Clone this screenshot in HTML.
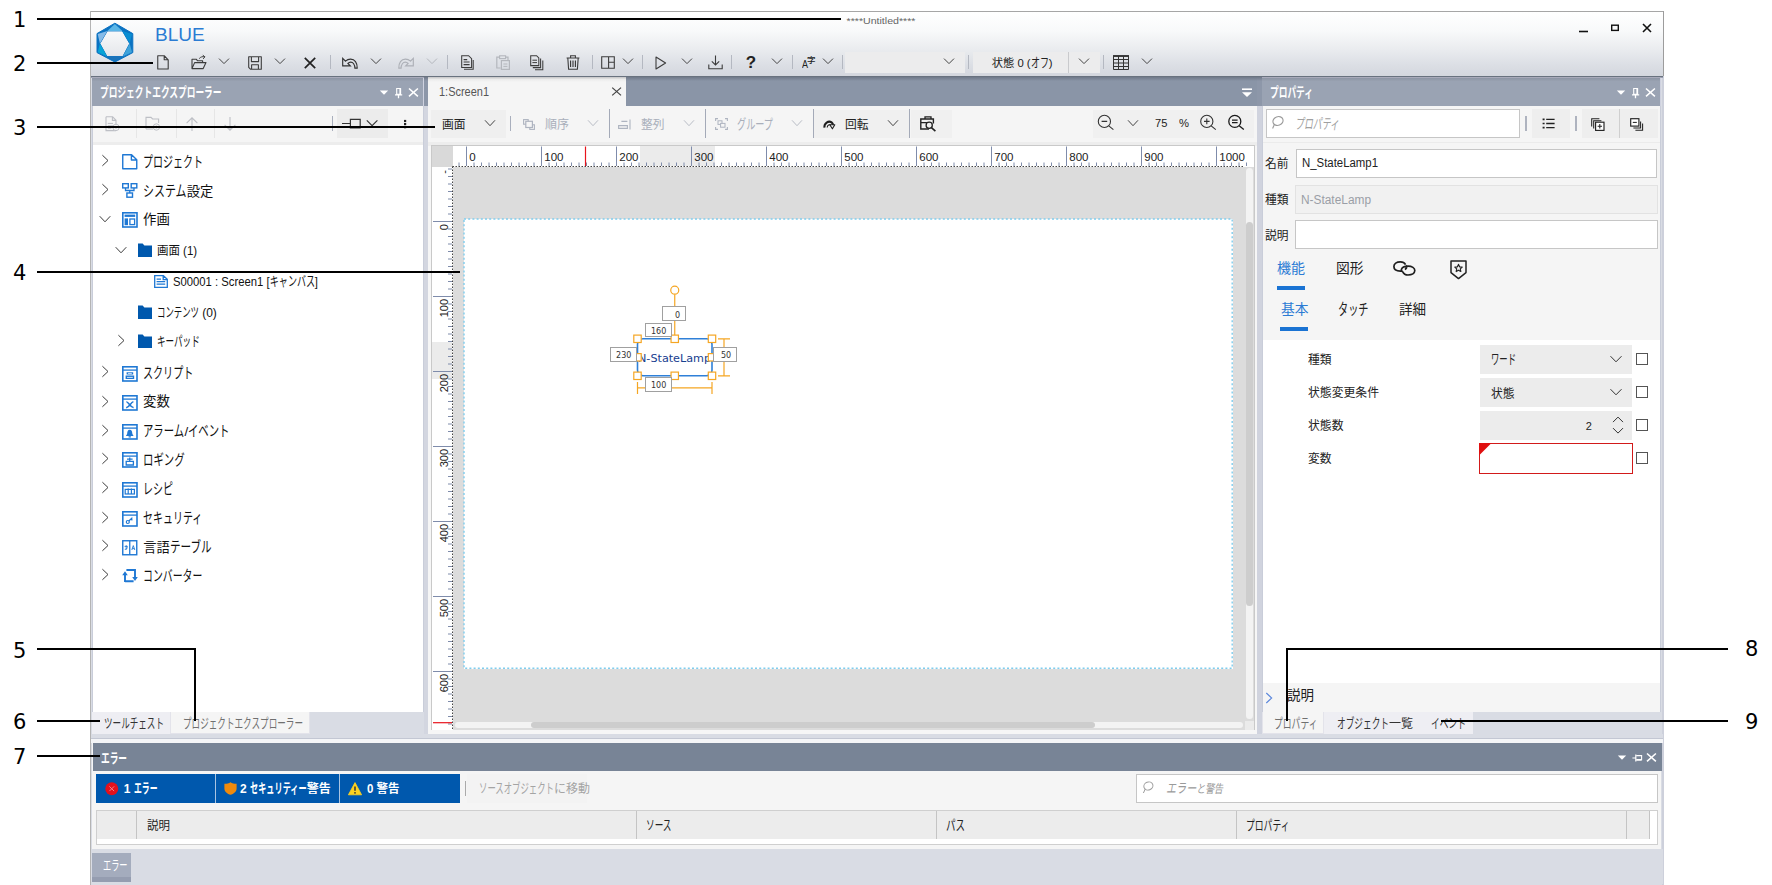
<!DOCTYPE html>
<html lang="ja"><head><meta charset="utf-8"><title>BLUE</title><style>
html,body{margin:0;padding:0;background:#fff;}
body{width:1772px;height:885px;position:relative;overflow:hidden;font-family:"Liberation Sans","Noto Sans CJK JP",sans-serif;}
div,span.t,svg{position:absolute;}
span.t{white-space:nowrap;display:block;}
svg{overflow:visible;}
</style></head><body>
<div style="left:90px;top:11px;width:1574px;height:874px;background:#d9dce4;"></div>
<div style="left:90px;top:11px;width:1574px;height:1px;background:#a6a6a6;"></div>
<div style="left:90px;top:11px;width:1px;height:874px;background:#b4b4b4;"></div>
<div style="left:1663px;top:11px;width:1px;height:65px;background:#9c9c9c;"></div>
<div style="left:1662px;top:76px;width:2px;height:809px;background:#cdd0db;"></div>
<div style="left:91px;top:12px;width:1572px;height:64px;background:linear-gradient(to bottom,#ffffff 0%,#f8f9fa 30%,#eaecef 58%,#dcdfe5 82%,#d4d7de 100%);"></div>
<div style="left:91px;top:75.6px;width:1572px;height:1.3px;background:#69727f;"></div>
<div style="left:91px;top:76.9px;width:1572px;height:1.1px;background:#9aa0b0;"></div>
<span class="t" id="t0" style="top:13.80px;font-size:9px;line-height:14px;color:#666;left:881px;transform-origin:50% 50%;transform:translateX(-50%) scaleX(1.1785);">****Untitled****</span>
<span class="t" id="t1" style="top:22.50px;font-size:19px;line-height:24px;color:#2b7cd3;left:155px;transform-origin:0 50%;">BLUE</span>
<svg style="left:1575px;top:20px;" width="90" height="20" viewBox="0 0 90 20"><path d="M4 11.5h9" stroke="#111" stroke-width="1.6" fill="none"/><rect x="36.7" y="5.2" width="6.6" height="5.2" fill="none" stroke="#111" stroke-width="1.4"/><path d="M68 4 L76 12 M76 4 L68 12" stroke="#111" stroke-width="1.6" fill="none"/></svg>
<svg style="left:97px;top:23.4px;" width="36" height="39.5" viewBox="0 0 36 39.5"><path d="M17.90 0.20 L35.80 10.60 L35.80 29.60 L17.90 39.00 L0.00 29.60 L0.00 10.60 Z M10.30 7.90 L25.40 7.90 L32.70 20.60 L25.80 33.60 L10.00 33.60 L2.90 20.60 Z" fill="#0a72c2" fill-rule="evenodd" stroke="#0a72c2" stroke-width="1" stroke-linejoin="round"/><path d="M17.89 1.02 L25.40 7.90 L10.30 7.90 Z" fill="#5ab5e6"/><path d="M35.08 10.99 L32.70 20.60 L25.40 7.90 Z" fill="#0a8ed2"/><path d="M35.10 29.33 L25.80 33.60 L32.70 20.60 Z" fill="#3fa3da"/><path d="M17.90 38.42 L10.00 33.60 L25.80 33.60 Z" fill="#1b73ba"/><path d="M0.69 29.33 L2.90 20.60 L10.00 33.60 Z" fill="#08a4d6"/><path d="M0.70 10.99 L10.30 7.90 L2.90 20.60 Z" fill="#86bbe8"/></svg>
<svg style="left:157px;top:55px;" width="12" height="15" viewBox="0 0 12 15"><path d="M0.75 0.75 H7.2 L11.2 4.8 V14 H0.75 Z M7.2 0.75 V4.8 H11.2" fill="none" stroke="#3c3c3c" stroke-width="1.1" stroke-linejoin="round"/></svg>
<svg style="left:191px;top:55px;" width="16" height="15" viewBox="0 0 16 15"><path d="M1 13.6 V4.2 H5.2 L6.6 5.8 H11.6 V7.6 M1 13.6 L3.6 7.6 H15 L12.2 13.6 Z" fill="none" stroke="#3c3c3c" stroke-width="1.1" stroke-linejoin="round"/><path d="M8.2 3.6 C9.6 1.8 11.6 1.4 13.6 1.8 M11.8 0.2 L13.9 1.8 L12.2 3.9" fill="none" stroke="#3c3c3c" stroke-width="1"/></svg>
<svg style="left:217.7px;top:57.4px;" width="12" height="8" viewBox="0 0 12 8"><path d="M1.0 1.5999999999999996 L6 6.6 L11.0 1.5999999999999996" fill="none" stroke="#444" stroke-width="1"/></svg>
<svg style="left:248px;top:55.5px;" width="14" height="14" viewBox="0 0 14 14"><path d="M0.7 0.7 H13.3 V13.3 H2.7 L0.7 11.3 Z M3.4 0.7 V5.6 H10.6 V0.7 M3.6 13.3 V8.8 H10.4 V13.3" fill="none" stroke="#3c3c3c" stroke-width="1.1" stroke-linejoin="round"/></svg>
<svg style="left:274px;top:57.4px;" width="12" height="8" viewBox="0 0 12 8"><path d="M1.0 1.5999999999999996 L6 6.6 L11.0 1.5999999999999996" fill="none" stroke="#444" stroke-width="1"/></svg>
<svg style="left:304px;top:57px;" width="12" height="12" viewBox="0 0 12 12"><path d="M0.8 0.8 L11.2 11.2 M11.2 0.8 L0.8 11.2" stroke="#222" stroke-width="1.7" fill="none"/></svg>
<div style="left:330px;top:55px;width:1px;height:14px;background:#b4b8c1;"></div>
<svg style="left:341.8px;top:56.8px;" width="16" height="12" viewBox="0 0 16 12"><path d="M0.7 1.3 V8.9 H8.3 L5.9 6.5 C7.5 4.7 10.1 4.7 11.5 6.5 C12.5 7.9 12.9 9.5 12.9 11.1 H15.2 C15.3 8.7 14.8 6.4 13.5 4.6 C11.1 1.3 6.3 1.5 3.5 4.1 Z" fill="none" stroke="#333" stroke-width="1.15" stroke-linejoin="miter"/></svg>
<svg style="left:369.8px;top:57.4px;" width="12" height="8" viewBox="0 0 12 8"><path d="M1.0 1.5999999999999996 L6 6.6 L11.0 1.5999999999999996" fill="none" stroke="#444" stroke-width="1"/></svg>
<svg style="left:397.8px;top:56.8px;" width="16" height="12" viewBox="0 0 16 12"><g transform="translate(16,0) scale(-1,1)"><path d="M0.7 1.3 V8.9 H8.3 L5.9 6.5 C7.5 4.7 10.1 4.7 11.5 6.5 C12.5 7.9 12.9 9.5 12.9 11.1 H15.2 C15.3 8.7 14.8 6.4 13.5 4.6 C11.1 1.3 6.3 1.5 3.5 4.1 Z" fill="none" stroke="#adb0b7" stroke-width="1.15" stroke-linejoin="miter"/></g></svg>
<svg style="left:425.8px;top:57.4px;" width="12" height="8" viewBox="0 0 12 8"><path d="M1.0 1.5999999999999996 L6 6.6 L11.0 1.5999999999999996" fill="none" stroke="#b4b7bd" stroke-width="1"/></svg>
<div style="left:447px;top:55px;width:1px;height:14px;background:#b4b8c1;"></div>
<svg style="left:461px;top:55px;" width="13" height="15" viewBox="0 0 13 15"><path d="M0.7 0.7 H7.6 L10.6 3.7 V12.4 H0.7 Z" fill="none" stroke="#3c3c3c" stroke-width="1.05"/><path d="M2.6 4.6 H6.2 M2.6 7 H8.6 M2.6 9.6 H8.6" stroke="#3c3c3c" stroke-width="1.1"/><path d="M12.2 5 V14.2 H3" fill="none" stroke="#3c3c3c" stroke-width="1.05"/></svg>
<svg style="left:495.5px;top:55px;" width="14" height="15" viewBox="0 0 14 15"><path d="M4 2.2 H0.8 V13 H4.6 M9.6 2.2 H12 V5" fill="none" stroke="#b4b7bd" stroke-width="1.2"/><rect x="3.6" y="0.8" width="6" height="2.8" fill="none" stroke="#b4b7bd" stroke-width="1.1"/><rect x="5.4" y="5.6" width="8" height="8.8" fill="none" stroke="#b4b7bd" stroke-width="1.2"/><path d="M7.4 9 H11.4 M7.4 11.4 H11.4" stroke="#b4b7bd" stroke-width="1"/></svg>
<svg style="left:530px;top:54.5px;" width="14" height="16" viewBox="0 0 14 16"><path d="M0.7 0.7 H6.6 L8.8 2.9 V10.6 H0.7 Z" fill="none" stroke="#3c3c3c" stroke-width="1.05"/><path d="M2.4 5.2 H7 M2.4 7.6 H7" stroke="#3c3c3c" stroke-width="1"/><path d="M10.6 3.4 V12.6 H2.8 M12.8 5.6 V14.8 H5" fill="none" stroke="#3c3c3c" stroke-width="1.05"/></svg>
<svg style="left:565.5px;top:55px;" width="14" height="15" viewBox="0 0 14 15"><path d="M0.6 3 H13.4 M4.6 2.8 V0.8 H9.4 V2.8 M1.8 3 L2.6 14.2 H11.4 L12.2 3" fill="none" stroke="#3c3c3c" stroke-width="1.1"/><path d="M4.6 5.4 V12 M7 5.4 V12 M9.4 5.4 V12" stroke="#333" stroke-width="1.1"/></svg>
<div style="left:592px;top:55px;width:1px;height:14px;background:#b4b8c1;"></div>
<svg style="left:601px;top:56px;" width="14" height="13" viewBox="0 0 14 13"><path d="M0.7 0.7 H13.3 V12.3 H0.7 Z M7.6 0.7 V12.3 M7.6 6.2 H13.3" fill="none" stroke="#3c3c3c" stroke-width="1.1"/></svg>
<svg style="left:622px;top:57.4px;" width="12" height="8" viewBox="0 0 12 8"><path d="M1.0 1.5999999999999996 L6 6.6 L11.0 1.5999999999999996" fill="none" stroke="#444" stroke-width="1"/></svg>
<div style="left:642px;top:55px;width:1px;height:14px;background:#b4b8c1;"></div>
<svg style="left:654.5px;top:55.5px;" width="12" height="14" viewBox="0 0 12 14"><path d="M1 1 L10.6 7 L1 13 Z" fill="none" stroke="#3c3c3c" stroke-width="1.1" stroke-linejoin="round"/></svg>
<svg style="left:681px;top:57.4px;" width="12" height="8" viewBox="0 0 12 8"><path d="M1.0 1.5999999999999996 L6 6.6 L11.0 1.5999999999999996" fill="none" stroke="#444" stroke-width="1"/></svg>
<svg style="left:707.5px;top:54.5px;" width="15" height="15" viewBox="0 0 15 15"><path d="M7.5 0.6 V9.8 M3.8 6.4 L7.5 10 L11.2 6.4 M0.8 9.4 V13.8 H14.2 V9.4" fill="none" stroke="#3c3c3c" stroke-width="1.1"/></svg>
<div style="left:731px;top:55px;width:1px;height:14px;background:#b4b8c1;"></div>
<span class="t" id="t2" style="top:52.50px;font-size:17px;line-height:20px;color:#222;font-weight:700;left:751px;transform-origin:50% 50%;transform:translateX(-50%);">?</span>
<svg style="left:771px;top:57.4px;" width="12" height="8" viewBox="0 0 12 8"><path d="M1.0 1.5999999999999996 L6 6.6 L11.0 1.5999999999999996" fill="none" stroke="#444" stroke-width="1"/></svg>
<div style="left:792px;top:55px;width:1px;height:14px;background:#b4b8c1;"></div>
<span class="t" id="t3" style="top:60.20px;font-size:10px;line-height:10px;color:#222;left:802px;transform-origin:0 50%;transform:scaleX(0.8993);">A</span>
<span class="t" id="t4" style="top:55.00px;font-size:8.5px;line-height:10px;color:#222;font-weight:500;left:807px;transform-origin:0 50%;">字</span>
<svg style="left:822px;top:57.4px;" width="12" height="8" viewBox="0 0 12 8"><path d="M1.0 1.5999999999999996 L6 6.6 L11.0 1.5999999999999996" fill="none" stroke="#444" stroke-width="1"/></svg>
<div style="left:842px;top:55px;width:1px;height:14px;background:#b4b8c1;"></div>
<div style="left:845px;top:51.5px;width:120px;height:21.5px;background:#ececed;"></div>
<svg style="left:943px;top:57.4px;" width="12" height="8" viewBox="0 0 12 8"><path d="M1.0 1.5999999999999996 L6 6.6 L11.0 1.5999999999999996" fill="none" stroke="#444" stroke-width="1"/></svg>
<div style="left:968px;top:55px;width:1px;height:14px;background:#b4b8c1;"></div>
<div style="left:973px;top:51.5px;width:127px;height:21.5px;background:#ececed;"></div>
<div style="left:1068px;top:51.5px;width:1px;height:21.5px;background:#c9cacd;"></div>
<span class="t" id="t5" aria-label="状態 0 (オフ)" style="top:54.30px;font-size:11.3px;line-height:17px;color:#222;left:991.7px;transform-origin:0 50%;">状態 0 (<span class="k" style="font-size:1.13em;display:inline-block;width:18.11px;transform:scaleX(0.7103);transform-origin:0 50%;">オフ</span>)</span>
<svg style="left:1078px;top:57.4px;" width="12" height="8" viewBox="0 0 12 8"><path d="M1.0 1.5999999999999996 L6 6.6 L11.0 1.5999999999999996" fill="none" stroke="#444" stroke-width="1"/></svg>
<div style="left:1103px;top:55px;width:1px;height:14px;background:#b4b8c1;"></div>
<svg style="left:1113px;top:55px;" width="16" height="15" viewBox="0 0 16 15"><path d="M0.5 1 H15.5 V14.5 H0.5 Z M0.5 4.5 H15.5 M0.5 8 H15.5 M0.5 11.5 H15.5 M5.5 1 V14.5 M10.5 1 V14.5" fill="none" stroke="#333" stroke-width="1"/><path d="M0 1 H16" stroke="#333" stroke-width="1.8"/></svg>
<svg style="left:1141px;top:57.4px;" width="12" height="8" viewBox="0 0 12 8"><path d="M1.0 1.5999999999999996 L6 6.6 L11.0 1.5999999999999996" fill="none" stroke="#444" stroke-width="1"/></svg>
<div style="left:92px;top:78px;width:332px;height:656px;background:#c9cdd9;"></div>
<div style="left:92px;top:78px;width:332px;height:28px;background:linear-gradient(to bottom,#8d95a4 0,#9aa3b3 3.5px);"></div>
<div style="left:92px;top:77.1px;width:332px;height:1px;background:#a8aaba;"></div>
<span class="t" id="t6" style="top:83.50px;font-size:12px;line-height:18px;color:#fff;font-weight:700;left:100px;transform-origin:0 50%;transform:scaleX(0.6420);"><span class="k" style="font-size:1.13em;">プロジェクトエクスプローラー</span></span>
<svg style="left:378px;top:84.5px;" width="44" height="16" viewBox="0 0 44 16"><path d="M1.8 5.5 H10.2 L6 9.7 Z" fill="#fff"/><path d="M18.7 3.5 H22.4 V9.4 H18.7 Z" fill="none" stroke="#fff" stroke-width="1.1"/><path d="M22.3 3.2 V9.4" stroke="#fff" stroke-width="1.7"/><path d="M17 9.9 H24.2 M20.5 10.1 V13.2" fill="none" stroke="#fff" stroke-width="1.3"/><path d="M31 3.5 L39.9 11.3 M39.9 3.5 L31 11.3" stroke="#fff" stroke-width="1.6" fill="none"/></svg>
<div style="left:423.2px;top:78px;width:1px;height:28px;background:#cfd2e0;"></div>
<div style="left:93px;top:106px;width:330px;height:35.5px;background:#f5f5f5;"></div>
<div style="left:93px;top:141.5px;width:330px;height:3.5px;background:#ededed;"></div>
<div style="left:93px;top:145px;width:330px;height:567px;background:#fff;"></div>
<svg style="left:105px;top:116px;" width="16" height="16" viewBox="0 0 16 16"><path d="M1 0.8 H7.6 L11 4.2 V8 M11 14.6 H1 V0.8 M7.4 1 V4.4 H11" fill="none" stroke="#bdbfc5" stroke-width="1.1"/><path d="M2.8 7.4 H8 M2.8 9.8 H8 M2.8 12.2 H6.4" stroke="#bdbfc5" stroke-width="1"/><circle cx="11" cy="11.4" r="3.2" fill="#f5f5f5" stroke="#bdbfc5" stroke-width="1"/><path d="M9.4 11.4 H12.6 M11 9.8 V13" stroke="#bdbfc5" stroke-width="0.9"/></svg>
<svg style="left:145px;top:116px;" width="16" height="16" viewBox="0 0 16 16"><path d="M1 13 V1.4 H6 L7.6 3 H13.6 V7" fill="none" stroke="#bdbfc5" stroke-width="1.1"/><path d="M1 13 H8" stroke="#bdbfc5" stroke-width="1.1"/><circle cx="11.4" cy="11" r="3.2" fill="#f5f5f5" stroke="#bdbfc5" stroke-width="1"/><path d="M9.8 11 H13 M11.4 9.4 V12.6" stroke="#bdbfc5" stroke-width="0.9"/></svg>
<svg style="left:185px;top:116px;" width="14" height="16" viewBox="0 0 14 16"><path d="M7 15 V2 M1.6 7.2 L7 1.8 L12.4 7.2" fill="none" stroke="#bdbfc5" stroke-width="1.1"/></svg>
<svg style="left:223px;top:116px;" width="14" height="16" viewBox="0 0 14 16"><path d="M7 1 V14 M1.6 8.8 L7 14.2 L12.4 8.8" fill="none" stroke="#bdbfc5" stroke-width="1.1"/></svg>
<div style="left:135.5px;top:109px;width:1px;height:29px;background:#e6e6e6;"></div>
<div style="left:175.5px;top:109px;width:1px;height:29px;background:#e6e6e6;"></div>
<div style="left:213.5px;top:109px;width:1px;height:29px;background:#e6e6e6;"></div>
<div style="left:332px;top:116px;width:1px;height:15px;background:#a9afbd;"></div>
<div style="left:336.5px;top:109px;width:51.5px;height:29px;background:#ececec;"></div>
<svg style="left:341px;top:116px;" width="22" height="14" viewBox="0 0 22 14"><path d="M1 7.5 H9.4 M9.4 3.4 H19.2 V11.8 H9.4 Z" fill="none" stroke="#333" stroke-width="1.2"/></svg>
<svg style="left:366px;top:118.8px;" width="12" height="8" viewBox="0 0 12 8"><path d="M0.7999999999999998 1.2999999999999998 L6.1 6.7 L11.399999999999999 1.2999999999999998" fill="none" stroke="#333" stroke-width="1.1"/></svg>
<svg style="left:402px;top:117px;" width="6" height="14" viewBox="0 0 6 14"><rect x="2" y="2.9" width="2.2" height="2.2" fill="#222"/><rect x="2" y="6" width="2.2" height="2.2" fill="#222"/><rect x="2" y="9.1" width="2.2" height="2.2" fill="#222"/></svg>
<svg style="left:100px;top:153.79999999999998px;" width="10" height="13" viewBox="0 0 10 13"><path d="M2.4000000000000004 1.2000000000000002 L8.0 6.5 L2.4000000000000004 11.8" fill="none" stroke="#3c3c3c" stroke-width="1"/></svg>
<svg style="left:122.2px;top:154.0px;" width="15.8" height="15.8" viewBox="0 0 15.8 15.8"><path d="M0.75 0.75 H9.6 L14.75 5.8 V14.75 H0.75 Z M9.4 0.9 V6 H14.6" fill="none" stroke="#1f78d4" stroke-width="1.4" stroke-linejoin="round"/></svg>
<span class="t" id="t7" style="top:151.60px;font-size:13.3px;line-height:20px;color:#111;left:143.2px;transform-origin:0 50%;transform:scaleX(0.6660);"><span class="k" style="font-size:1.13em;">プロジェクト</span></span>
<svg style="left:100px;top:183.1px;" width="10" height="13" viewBox="0 0 10 13"><path d="M2.4000000000000004 1.2000000000000002 L8.0 6.5 L2.4000000000000004 11.8" fill="none" stroke="#3c3c3c" stroke-width="1"/></svg>
<svg style="left:122.2px;top:183.3px;" width="15.8" height="15.8" viewBox="0 0 15.8 15.8"><rect x="0.7" y="0.7" width="5.6" height="4.2" fill="none" stroke="#1f78d4" stroke-width="1.4"/><rect x="9.2" y="0.7" width="5.6" height="4.2" fill="none" stroke="#1f78d4" stroke-width="1.4"/><rect x="4.9" y="10" width="5.6" height="4.2" fill="none" stroke="#1f78d4" stroke-width="1.4"/><path d="M3.5 5 V7.5 H12 V5 M7.75 7.5 V10" fill="none" stroke="#1f78d4" stroke-width="1.3"/></svg>
<span class="t" id="t8" aria-label="システム設定" style="top:180.90px;font-size:13.3px;line-height:20px;color:#111;left:143.2px;transform-origin:0 50%;"><span class="k" style="font-size:1.13em;display:inline-block;width:43.61px;transform:scaleX(0.7313);transform-origin:0 50%;">システム</span>設定</span>
<svg style="left:99px;top:213.70000000000002px;" width="12" height="10" viewBox="0 0 12 10"><path d="M0.7000000000000002 2.2 L6 7.8 L11.3 2.2" fill="none" stroke="#3c3c3c" stroke-width="1"/></svg>
<svg style="left:122.2px;top:212.10000000000002px;" width="15.8" height="15.8" viewBox="0 0 15.8 15.8"><rect x="0.8" y="0.8" width="14.2" height="14.2" fill="none" stroke="#1f78d4" stroke-width="1.6"/><rect x="2.6" y="2.6" width="10.6" height="2.3" fill="#1f78d4"/><rect x="2.6" y="6.4" width="3.4" height="6.8" fill="#1f78d4"/><rect x="7.9" y="7" width="4.7" height="5.6" fill="none" stroke="#1f78d4" stroke-width="1.3"/></svg>
<span class="t" id="t9" style="top:209.70px;font-size:13.3px;line-height:20px;color:#111;left:143.2px;transform-origin:0 50%;transform:scaleX(1.0078);">作画</span>
<svg style="left:115px;top:244.9px;" width="12" height="10" viewBox="0 0 12 10"><path d="M0.7000000000000002 2.2 L6 7.8 L11.3 2.2" fill="none" stroke="#3c3c3c" stroke-width="1"/></svg>
<svg style="left:138px;top:243.3px;" width="14" height="14" viewBox="0 0 14 14"><path d="M0 0.4 H4.6 L6.4 2.6 H14 V14 H0 Z" fill="#0058ad"/></svg>
<span class="t" id="t10" style="top:240.50px;font-size:12px;line-height:20px;color:#111;left:156.8px;transform-origin:0 50%;transform:scaleX(0.9544);">画面 (1)</span>
<svg style="left:154px;top:274.7px;" width="14" height="13" viewBox="0 0 14 13"><path d="M0.7 0.7 H9.4 L13.3 4.4 V12.3 H0.7 Z M9.2 0.9 V4.6 H13.1" fill="none" stroke="#1f78d4" stroke-width="1.3"/><path d="M2.6 4.2 H7 M2.6 6.6 H11.2 M2.6 9.2 H11.2" stroke="#1f78d4" stroke-width="1.3"/></svg>
<span class="t" id="t11" aria-label="S00001 : Screen1 [キャンバス]" style="top:271.50px;font-size:12px;line-height:20px;color:#111;left:173px;transform-origin:0 50%;transform:scaleX(0.9400);">S00001 : Screen1 [<span class="k" style="font-size:1.13em;display:inline-block;width:48.16px;transform:scaleX(0.7109);transform-origin:0 50%;">キャンバス</span>]</span>
<svg style="left:138px;top:305.2px;" width="14" height="14" viewBox="0 0 14 14"><path d="M0 0.4 H4.6 L6.4 2.6 H14 V14 H0 Z" fill="#0058ad"/></svg>
<span class="t" id="t12" aria-label="コンテンツ (0)" style="top:303.10px;font-size:12px;line-height:20px;color:#111;left:156.8px;transform-origin:0 50%;"><span class="k" style="font-size:1.13em;display:inline-block;width:42.00px;transform:scaleX(0.6199);transform-origin:0 50%;">コンテンツ</span> (0)</span>
<svg style="left:116px;top:333.8px;" width="10" height="13" viewBox="0 0 10 13"><path d="M2.4000000000000004 1.2000000000000002 L8.0 6.5 L2.4000000000000004 11.8" fill="none" stroke="#3c3c3c" stroke-width="1"/></svg>
<svg style="left:138px;top:334.0px;" width="14" height="14" viewBox="0 0 14 14"><path d="M0 0.4 H4.6 L6.4 2.6 H14 V14 H0 Z" fill="#0058ad"/></svg>
<span class="t" id="t13" style="top:331.90px;font-size:12px;line-height:20px;color:#111;left:156.8px;transform-origin:0 50%;transform:scaleX(0.6316);"><span class="k" style="font-size:1.13em;">キーパッド</span></span>
<svg style="left:100px;top:365.3px;" width="10" height="13" viewBox="0 0 10 13"><path d="M2.4000000000000004 1.2000000000000002 L8.0 6.5 L2.4000000000000004 11.8" fill="none" stroke="#3c3c3c" stroke-width="1"/></svg>
<svg style="left:122.2px;top:365.5px;" width="15.8" height="15.8" viewBox="0 0 15.8 15.8"><rect x="0.8" y="0.8" width="14.2" height="14.2" fill="none" stroke="#1f78d4" stroke-width="1.6"/><path d="M0.8 4.1 H15" stroke="#1f78d4" stroke-width="1.3"/><path d="M4.6 6.2 H11.2 V8.6 H4.6 Z M3.6 9.4 H12.2 V13 H3.6 Z" fill="#1f78d4"/><path d="M6 7.4 H9.8 M5 11.4 H10.8" stroke="#fff" stroke-width="0.8"/></svg>
<span class="t" id="t14" style="top:363.10px;font-size:13.3px;line-height:20px;color:#111;left:143.2px;transform-origin:0 50%;transform:scaleX(0.6700);"><span class="k" style="font-size:1.13em;">スクリプト</span></span>
<svg style="left:100px;top:394.5px;" width="10" height="13" viewBox="0 0 10 13"><path d="M2.4000000000000004 1.2000000000000002 L8.0 6.5 L2.4000000000000004 11.8" fill="none" stroke="#3c3c3c" stroke-width="1"/></svg>
<svg style="left:122.2px;top:394.7px;" width="15.8" height="15.8" viewBox="0 0 15.8 15.8"><rect x="0.8" y="0.8" width="14.2" height="14.2" fill="none" stroke="#1f78d4" stroke-width="1.6"/><path d="M0.8 4.1 H15" stroke="#1f78d4" stroke-width="1.3"/><path d="M4.4 7 C6.6 6.4 8.2 12.8 11.6 12.4 M11.4 6.6 C8.6 7.6 7.6 12 4.2 12.8" fill="none" stroke="#1f78d4" stroke-width="1.5"/></svg>
<span class="t" id="t15" style="top:392.30px;font-size:13.3px;line-height:20px;color:#111;left:143.2px;transform-origin:0 50%;transform:scaleX(1.0078);">変数</span>
<svg style="left:100px;top:423.6px;" width="10" height="13" viewBox="0 0 10 13"><path d="M2.4000000000000004 1.2000000000000002 L8.0 6.5 L2.4000000000000004 11.8" fill="none" stroke="#3c3c3c" stroke-width="1"/></svg>
<svg style="left:122.2px;top:423.8px;" width="15.8" height="15.8" viewBox="0 0 15.8 15.8"><rect x="0.8" y="0.8" width="14.2" height="14.2" fill="none" stroke="#1f78d4" stroke-width="1.6"/><path d="M0.8 4.1 H15" stroke="#1f78d4" stroke-width="1.3"/><path d="M7.75 5.8 C9.8 5.8 10.2 8 10.4 10 L11.6 12 H3.9 L5.1 10 C5.3 8 5.7 5.8 7.75 5.8 Z M6.6 12.2 H8.9 V13.4 H6.6 Z" fill="#1f78d4"/></svg>
<span class="t" id="t16" aria-label="アラーム/イベント" style="top:421.40px;font-size:13.3px;line-height:20px;color:#111;left:143.2px;transform-origin:0 50%;"><span class="k" style="font-size:1.13em;display:inline-block;width:41.20px;transform:scaleX(0.6909);transform-origin:0 50%;">アラーム</span>/<span class="k" style="font-size:1.13em;display:inline-block;width:41.50px;transform:scaleX(0.6909);transform-origin:0 50%;">イベント</span></span>
<svg style="left:100px;top:452.1px;" width="10" height="13" viewBox="0 0 10 13"><path d="M2.4000000000000004 1.2000000000000002 L8.0 6.5 L2.4000000000000004 11.8" fill="none" stroke="#3c3c3c" stroke-width="1"/></svg>
<svg style="left:122.2px;top:452.3px;" width="15.8" height="15.8" viewBox="0 0 15.8 15.8"><rect x="0.8" y="0.8" width="14.2" height="14.2" fill="none" stroke="#1f78d4" stroke-width="1.6"/><path d="M0.8 4.1 H15" stroke="#1f78d4" stroke-width="1.3"/><path d="M7.75 5.6 V9 M5 7.2 H10.6 M4.2 9.4 H11.4 V13 H4.2 Z" fill="none" stroke="#1f78d4" stroke-width="1.3"/></svg>
<span class="t" id="t17" style="top:449.90px;font-size:13.3px;line-height:20px;color:#111;left:143.2px;transform-origin:0 50%;transform:scaleX(0.6926);"><span class="k" style="font-size:1.13em;">ロギング</span></span>
<svg style="left:100px;top:481.40000000000003px;" width="10" height="13" viewBox="0 0 10 13"><path d="M2.4000000000000004 1.2000000000000002 L8.0 6.5 L2.4000000000000004 11.8" fill="none" stroke="#3c3c3c" stroke-width="1"/></svg>
<svg style="left:122.2px;top:481.6px;" width="15.8" height="15.8" viewBox="0 0 15.8 15.8"><rect x="0.8" y="0.8" width="14.2" height="14.2" fill="none" stroke="#1f78d4" stroke-width="1.6"/><path d="M0.8 4.1 H15" stroke="#1f78d4" stroke-width="1.3"/><rect x="3.2" y="7.4" width="9.2" height="4.6" fill="none" stroke="#1f78d4" stroke-width="1.2"/><path d="M6.2 6.6 V12 M9.4 6.6 V12" stroke="#1f78d4" stroke-width="1.2"/></svg>
<span class="t" id="t18" style="top:479.20px;font-size:13.3px;line-height:20px;color:#111;left:143.2px;transform-origin:0 50%;transform:scaleX(0.6660);"><span class="k" style="font-size:1.13em;">レシピ</span></span>
<svg style="left:100px;top:510.6px;" width="10" height="13" viewBox="0 0 10 13"><path d="M2.4000000000000004 1.2000000000000002 L8.0 6.5 L2.4000000000000004 11.8" fill="none" stroke="#3c3c3c" stroke-width="1"/></svg>
<svg style="left:122.2px;top:510.8px;" width="15.8" height="15.8" viewBox="0 0 15.8 15.8"><rect x="0.8" y="0.8" width="14.2" height="14.2" fill="none" stroke="#1f78d4" stroke-width="1.6"/><path d="M0.8 4.1 H15" stroke="#1f78d4" stroke-width="1.3"/><circle cx="5.8" cy="11" r="1.5" fill="none" stroke="#1f78d4" stroke-width="1.2"/><path d="M6.8 10 L10.4 6.6 M9 8 L10.4 9.2" fill="none" stroke="#1f78d4" stroke-width="1.3"/></svg>
<span class="t" id="t19" style="top:508.40px;font-size:13.3px;line-height:20px;color:#111;left:143.2px;transform-origin:0 50%;transform:scaleX(0.6648);"><span class="k" style="font-size:1.13em;">セキュリティ</span></span>
<svg style="left:100px;top:539.4px;" width="10" height="13" viewBox="0 0 10 13"><path d="M2.4000000000000004 1.2000000000000002 L8.0 6.5 L2.4000000000000004 11.8" fill="none" stroke="#3c3c3c" stroke-width="1"/></svg>
<svg style="left:122.2px;top:539.5999999999999px;" width="15.8" height="15.8" viewBox="0 0 15.8 15.8"><rect x="0.75" y="0.75" width="14" height="14" fill="none" stroke="#1f78d4" stroke-width="1.4"/><path d="M7.75 0.75 V14.75" stroke="#1f78d4" stroke-width="1.3"/><path d="M2.6 6.4 H5.8 M4.2 5.2 V9.6 M2.8 9.4 C4.4 9.4 5.6 8.2 5.4 7.4" fill="none" stroke="#1f78d4" stroke-width="0.9"/><path d="M9.8 10 L11.3 5.6 L12.8 10 M10.3 8.6 H12.3" fill="none" stroke="#1f78d4" stroke-width="0.9"/></svg>
<span class="t" id="t20" aria-label="言語テーブル" style="top:537.20px;font-size:13.3px;line-height:20px;color:#111;left:143.2px;transform-origin:0 50%;">言語<span class="k" style="font-size:1.13em;display:inline-block;width:41.71px;transform:scaleX(0.7048);transform-origin:0 50%;">テーブル</span></span>
<svg style="left:100px;top:568.2px;" width="10" height="13" viewBox="0 0 10 13"><path d="M2.4000000000000004 1.2000000000000002 L8.0 6.5 L2.4000000000000004 11.8" fill="none" stroke="#3c3c3c" stroke-width="1"/></svg>
<svg style="left:122.2px;top:568.4px;" width="15.8" height="15.8" viewBox="0 0 15.8 15.8"><path d="M3 14 V5.4 M3 13.2 H11.6 M4.4 2 H13 V10.6" fill="none" stroke="#1f78d4" stroke-width="1.9"/><path d="M0.2 7.2 L3 3.2 L5.8 7.2 Z M10.2 9 L13 13 L15.8 9 Z" fill="#1f78d4"/></svg>
<span class="t" id="t21" style="top:566.00px;font-size:13.3px;line-height:20px;color:#111;left:143.2px;transform-origin:0 50%;transform:scaleX(0.6582);"><span class="k" style="font-size:1.13em;">コンバーター</span></span>
<div style="left:92px;top:712px;width:78px;height:21.5px;background:#eeeef3;"></div>
<span class="t" id="t22" style="top:714.50px;font-size:12px;line-height:18px;color:#333;left:104px;transform-origin:0 50%;transform:scaleX(0.6326);"><span class="k" style="font-size:1.13em;">ツールチェスト</span></span>
<div style="left:170px;top:712px;width:140px;height:21.5px;background:#f5f5f5;border:1px solid #e3e3ea;border-top:none;box-sizing:border-box;"></div>
<span class="t" id="t23" style="top:714.50px;font-size:12px;line-height:18px;color:#707070;left:183px;transform-origin:0 50%;transform:scaleX(0.6340);"><span class="k" style="font-size:1.13em;">プロジェクトエクスプローラー</span></span>
<div style="left:310px;top:712px;width:114px;height:22px;background:#d9dce4;"></div>
<div style="left:428px;top:77px;width:829px;height:29px;background:linear-gradient(to bottom,#6f7888 0,#8a95a7 4px);"></div>
<div style="left:428px;top:77px;width:198px;height:29.5px;background:linear-gradient(to bottom,#c4c4c6 0,#ececec 2.5px,#f5f5f5 5px);"></div>
<span class="t" id="t24" style="top:82.80px;font-size:12.2px;line-height:18px;color:#555;left:438.5px;transform-origin:0 50%;transform:scaleX(0.8999);">1:Screen1</span>
<svg style="left:611px;top:85.6px;" width="12" height="12" viewBox="0 0 12 12"><path d="M1.2 1.6 L10 9.4 M10 1.6 L1.2 9.4" stroke="#444" stroke-width="1.25" fill="none"/></svg>
<svg style="left:1241px;top:87.5px;" width="12" height="10" viewBox="0 0 12 10"><path d="M1 1.2 H11" stroke="#fff" stroke-width="1.6"/><path d="M1 4.2 H11 L6 9 Z" fill="#fff"/></svg>
<div style="left:428px;top:106px;width:829px;height:35.5px;background:#f5f5f5;"></div>
<div style="left:428px;top:141.5px;width:829px;height:4px;background:#ededed;"></div>
<div style="left:428px;top:145.5px;width:829px;height:588px;background:#f6f6f6;"></div>
<div style="left:431px;top:109.5px;width:75px;height:28px;background:#efefef;"></div>
<span class="t" id="t25" style="top:115.50px;font-size:12px;line-height:18px;color:#222;left:442px;transform-origin:0 50%;transform:scaleX(0.9785);">画面</span>
<svg style="left:484px;top:119px;" width="12" height="8" viewBox="0 0 12 8"><path d="M1.0 1.2999999999999998 L6 6.7 L11.0 1.2999999999999998" fill="none" stroke="#444" stroke-width="1"/></svg>
<div style="left:510px;top:116px;width:1px;height:15px;background:#a9afbd;"></div>
<svg style="left:523px;top:119px;" width="12" height="11" viewBox="0 0 12 11"><rect x="0.6" y="0.6" width="4.6" height="4.6" fill="none" stroke="#aeb4c0" stroke-width="1.1"/><rect x="6.8" y="5.8" width="4.6" height="4.6" fill="none" stroke="#aeb4c0" stroke-width="1.1"/><rect x="2.8" y="2.3" width="6.6" height="6.2" fill="#f5f5f5" stroke="#aeb4c0" stroke-width="1.2"/></svg>
<span class="t" id="t26" style="top:115.50px;font-size:12px;line-height:18px;color:#a9afbb;left:545px;transform-origin:0 50%;">順序</span>
<svg style="left:587px;top:119px;" width="12" height="8" viewBox="0 0 12 8"><path d="M1.0 1.2999999999999998 L6 6.7 L11.0 1.2999999999999998" fill="none" stroke="#b9bdc6" stroke-width="1"/></svg>
<div style="left:609px;top:109px;width:1px;height:29px;background:#a4aab8;"></div>
<svg style="left:618px;top:119px;" width="14" height="11" viewBox="0 0 14 11"><path d="M0.6 6.6 H9.4 V9.4 H0.6 Z M3.4 2.4 H9.4 M12 0.6 V10.4" fill="none" stroke="#aeb4c0" stroke-width="1.1"/></svg>
<span class="t" id="t27" style="top:115.50px;font-size:12px;line-height:18px;color:#a9afbb;left:641px;transform-origin:0 50%;transform:scaleX(0.9785);">整列</span>
<svg style="left:683px;top:119px;" width="12" height="8" viewBox="0 0 12 8"><path d="M1.0 1.2999999999999998 L6 6.7 L11.0 1.2999999999999998" fill="none" stroke="#b9bdc6" stroke-width="1"/></svg>
<div style="left:705px;top:109px;width:1px;height:29px;background:#a4aab8;"></div>
<svg style="left:714.5px;top:118px;" width="13" height="12" viewBox="0 0 13 12"><path d="M0.6 3 V0.6 H3 M10 0.6 H12.4 V3 M12.4 9 V11.4 H10 M3 11.4 H0.6 V9" fill="none" stroke="#aeb4c0" stroke-width="1.1"/><rect x="3" y="2.8" width="4" height="3.6" fill="none" stroke="#aeb4c0" stroke-width="1"/><rect x="5.6" y="5.4" width="4.4" height="3.8" fill="#f5f5f5" stroke="#aeb4c0" stroke-width="1"/></svg>
<span class="t" id="t28" style="top:115.50px;font-size:12px;line-height:18px;color:#a9afbb;left:737px;transform-origin:0 50%;transform:scaleX(0.6745);"><span class="k" style="font-size:1.13em;">グループ</span></span>
<svg style="left:791px;top:119px;" width="12" height="8" viewBox="0 0 12 8"><path d="M1.0 1.2999999999999998 L6 6.7 L11.0 1.2999999999999998" fill="none" stroke="#b9bdc6" stroke-width="1"/></svg>
<div style="left:813px;top:109px;width:1px;height:29px;background:#a4aab8;"></div>
<div style="left:814px;top:109.5px;width:95px;height:28px;background:#f0f0f0;"></div>
<svg style="left:823px;top:120px;" width="13" height="10" viewBox="0 0 13 10"><path d="M1.4 7.6 C1 3.4 5.4 0.2 8.6 2.4 C9.6 3.2 10 4 10.2 5" fill="none" stroke="#1e1e1e" stroke-width="2"/><path d="M4.2 7.4 C4.2 5.2 6.6 4.2 8 5.2" fill="none" stroke="#1e1e1e" stroke-width="1.1"/><path d="M6.8 4.8 H11.8 L9.4 8.8 Z" fill="#efefef" stroke="#1e1e1e" stroke-width="1.1" stroke-linejoin="round"/></svg>
<span class="t" id="t29" style="top:115.50px;font-size:12px;line-height:18px;color:#222;left:845px;transform-origin:0 50%;transform:scaleX(0.9785);">回転</span>
<svg style="left:887px;top:119px;" width="12" height="8" viewBox="0 0 12 8"><path d="M1.0 1.2999999999999998 L6 6.7 L11.0 1.2999999999999998" fill="none" stroke="#444" stroke-width="1"/></svg>
<div style="left:909px;top:109px;width:1px;height:29px;background:#a4aab8;"></div>
<div style="left:910.5px;top:109.5px;width:41.5px;height:28px;background:#f0f0f0;"></div>
<svg style="left:920px;top:115.5px;" width="17" height="16" viewBox="0 0 17 16"><path d="M5 3 V0.8 H11 V3" fill="none" stroke="#222" stroke-width="1.3"/><path d="M9 13 H0.8 V3 H13.4 V7.4 M0.8 6.6 H8" fill="none" stroke="#222" stroke-width="1.4"/><circle cx="9.2" cy="9.2" r="3.1" fill="#f0f0f0" stroke="#222" stroke-width="1.3"/><path d="M11.4 11.6 L15.4 15.2" stroke="#222" stroke-width="1.6"/></svg>
<div style="left:1093px;top:109.5px;width:161px;height:28px;background:#f0f0f0;"></div>
<svg style="left:1097px;top:115px;" width="18" height="18" viewBox="0 0 18 18"><circle cx="7.4" cy="6.4" r="6.1" fill="none" stroke="#333" stroke-width="1.1"/><path d="M4.6 6.4 H10.2 M11.8 10.8 L16.4 14.6" stroke="#333" stroke-width="1.1"/></svg>
<svg style="left:1127px;top:119px;" width="12" height="8" viewBox="0 0 12 8"><path d="M1.0 1.2999999999999998 L6 6.7 L11.0 1.2999999999999998" fill="none" stroke="#444" stroke-width="1"/></svg>
<span class="t" id="t30" style="top:115.00px;font-size:11px;line-height:16px;color:#222;left:1154.6px;transform-origin:0 50%;transform:scaleX(1.0122);">75</span>
<span class="t" id="t31" style="top:115.00px;font-size:11px;line-height:16px;color:#222;left:1178.8px;transform-origin:0 50%;transform:scaleX(1.0224);">%</span>
<svg style="left:1200px;top:115px;" width="18" height="18" viewBox="0 0 18 18"><circle cx="6.8" cy="6.4" r="6.1" fill="none" stroke="#333" stroke-width="1.1"/><path d="M4 6.4 H9.6 M6.8 3.6 V9.2 M11.2 10.8 L15.8 14.6" stroke="#333" stroke-width="1.1"/></svg>
<svg style="left:1228px;top:115px;" width="18" height="18" viewBox="0 0 18 18"><circle cx="6.8" cy="6.4" r="6" fill="none" stroke="#1a1a1a" stroke-width="1.3"/><path d="M4 5.2 H9.6 M4 7.6 H9.6 M11.2 10.8 L15.8 14.6" stroke="#1a1a1a" stroke-width="1.3"/></svg>
<div style="left:431px;top:145px;width:824px;height:585px;background:#c9c9c9;"></div>
<div style="left:432px;top:146px;width:822px;height:584px;background:#fff;"></div>
<div style="left:432px;top:146px;width:20.5px;height:20.5px;background:#d9d9d9;"></div>
<div style="left:452.5px;top:166.5px;width:801.5px;height:563.5px;background:#dcdcdc;"></div>
<div style="left:639.5px;top:146px;width:75px;height:20px;background:#ebebeb;"></div>
<div style="left:432px;top:341.5px;width:20px;height:37.5px;background:#ebebeb;"></div>
<svg style="left:0px;top:0px;" width="1772" height="885" viewBox="0 0 1772 885"><path d="M459.0 162.5 V166" stroke="#7f8cab" stroke-width="1"/><path d="M466.5 146.5 V166" stroke="#7f8cab" stroke-width="1"/><path d="M474.0 162.5 V166" stroke="#7f8cab" stroke-width="1"/><path d="M481.5 162.5 V166" stroke="#7f8cab" stroke-width="1"/><path d="M489.0 162.5 V166" stroke="#7f8cab" stroke-width="1"/><path d="M496.5 162.5 V166" stroke="#7f8cab" stroke-width="1"/><path d="M504.0 162.5 V166" stroke="#7f8cab" stroke-width="1"/><path d="M511.5 162.5 V166" stroke="#7f8cab" stroke-width="1"/><path d="M519.0 162.5 V166" stroke="#7f8cab" stroke-width="1"/><path d="M526.5 162.5 V166" stroke="#7f8cab" stroke-width="1"/><path d="M534.0 162.5 V166" stroke="#7f8cab" stroke-width="1"/><path d="M541.5 146.5 V166" stroke="#7f8cab" stroke-width="1"/><path d="M549.0 162.5 V166" stroke="#7f8cab" stroke-width="1"/><path d="M556.5 162.5 V166" stroke="#7f8cab" stroke-width="1"/><path d="M564.0 162.5 V166" stroke="#7f8cab" stroke-width="1"/><path d="M571.5 162.5 V166" stroke="#7f8cab" stroke-width="1"/><path d="M579.0 162.5 V166" stroke="#7f8cab" stroke-width="1"/><path d="M586.5 162.5 V166" stroke="#7f8cab" stroke-width="1"/><path d="M594.0 162.5 V166" stroke="#7f8cab" stroke-width="1"/><path d="M601.5 162.5 V166" stroke="#7f8cab" stroke-width="1"/><path d="M609.0 162.5 V166" stroke="#7f8cab" stroke-width="1"/><path d="M616.5 146.5 V166" stroke="#7f8cab" stroke-width="1"/><path d="M624.0 162.5 V166" stroke="#7f8cab" stroke-width="1"/><path d="M631.5 162.5 V166" stroke="#7f8cab" stroke-width="1"/><path d="M639.0 162.5 V166" stroke="#7f8cab" stroke-width="1"/><path d="M646.5 162.5 V166" stroke="#7f8cab" stroke-width="1"/><path d="M654.0 162.5 V166" stroke="#7f8cab" stroke-width="1"/><path d="M661.5 162.5 V166" stroke="#7f8cab" stroke-width="1"/><path d="M669.0 162.5 V166" stroke="#7f8cab" stroke-width="1"/><path d="M676.5 162.5 V166" stroke="#7f8cab" stroke-width="1"/><path d="M684.0 162.5 V166" stroke="#7f8cab" stroke-width="1"/><path d="M691.5 146.5 V166" stroke="#7f8cab" stroke-width="1"/><path d="M699.0 162.5 V166" stroke="#7f8cab" stroke-width="1"/><path d="M706.5 162.5 V166" stroke="#7f8cab" stroke-width="1"/><path d="M714.0 162.5 V166" stroke="#7f8cab" stroke-width="1"/><path d="M721.5 162.5 V166" stroke="#7f8cab" stroke-width="1"/><path d="M729.0 162.5 V166" stroke="#7f8cab" stroke-width="1"/><path d="M736.5 162.5 V166" stroke="#7f8cab" stroke-width="1"/><path d="M744.0 162.5 V166" stroke="#7f8cab" stroke-width="1"/><path d="M751.5 162.5 V166" stroke="#7f8cab" stroke-width="1"/><path d="M759.0 162.5 V166" stroke="#7f8cab" stroke-width="1"/><path d="M766.5 146.5 V166" stroke="#7f8cab" stroke-width="1"/><path d="M774.0 162.5 V166" stroke="#7f8cab" stroke-width="1"/><path d="M781.5 162.5 V166" stroke="#7f8cab" stroke-width="1"/><path d="M789.0 162.5 V166" stroke="#7f8cab" stroke-width="1"/><path d="M796.5 162.5 V166" stroke="#7f8cab" stroke-width="1"/><path d="M804.0 162.5 V166" stroke="#7f8cab" stroke-width="1"/><path d="M811.5 162.5 V166" stroke="#7f8cab" stroke-width="1"/><path d="M819.0 162.5 V166" stroke="#7f8cab" stroke-width="1"/><path d="M826.5 162.5 V166" stroke="#7f8cab" stroke-width="1"/><path d="M834.0 162.5 V166" stroke="#7f8cab" stroke-width="1"/><path d="M841.5 146.5 V166" stroke="#7f8cab" stroke-width="1"/><path d="M849.0 162.5 V166" stroke="#7f8cab" stroke-width="1"/><path d="M856.5 162.5 V166" stroke="#7f8cab" stroke-width="1"/><path d="M864.0 162.5 V166" stroke="#7f8cab" stroke-width="1"/><path d="M871.5 162.5 V166" stroke="#7f8cab" stroke-width="1"/><path d="M879.0 162.5 V166" stroke="#7f8cab" stroke-width="1"/><path d="M886.5 162.5 V166" stroke="#7f8cab" stroke-width="1"/><path d="M894.0 162.5 V166" stroke="#7f8cab" stroke-width="1"/><path d="M901.5 162.5 V166" stroke="#7f8cab" stroke-width="1"/><path d="M909.0 162.5 V166" stroke="#7f8cab" stroke-width="1"/><path d="M916.5 146.5 V166" stroke="#7f8cab" stroke-width="1"/><path d="M924.0 162.5 V166" stroke="#7f8cab" stroke-width="1"/><path d="M931.5 162.5 V166" stroke="#7f8cab" stroke-width="1"/><path d="M939.0 162.5 V166" stroke="#7f8cab" stroke-width="1"/><path d="M946.5 162.5 V166" stroke="#7f8cab" stroke-width="1"/><path d="M954.0 162.5 V166" stroke="#7f8cab" stroke-width="1"/><path d="M961.5 162.5 V166" stroke="#7f8cab" stroke-width="1"/><path d="M969.0 162.5 V166" stroke="#7f8cab" stroke-width="1"/><path d="M976.5 162.5 V166" stroke="#7f8cab" stroke-width="1"/><path d="M984.0 162.5 V166" stroke="#7f8cab" stroke-width="1"/><path d="M991.5 146.5 V166" stroke="#7f8cab" stroke-width="1"/><path d="M999.0 162.5 V166" stroke="#7f8cab" stroke-width="1"/><path d="M1006.5 162.5 V166" stroke="#7f8cab" stroke-width="1"/><path d="M1014.0 162.5 V166" stroke="#7f8cab" stroke-width="1"/><path d="M1021.5 162.5 V166" stroke="#7f8cab" stroke-width="1"/><path d="M1029.0 162.5 V166" stroke="#7f8cab" stroke-width="1"/><path d="M1036.5 162.5 V166" stroke="#7f8cab" stroke-width="1"/><path d="M1044.0 162.5 V166" stroke="#7f8cab" stroke-width="1"/><path d="M1051.5 162.5 V166" stroke="#7f8cab" stroke-width="1"/><path d="M1059.0 162.5 V166" stroke="#7f8cab" stroke-width="1"/><path d="M1066.5 146.5 V166" stroke="#7f8cab" stroke-width="1"/><path d="M1074.0 162.5 V166" stroke="#7f8cab" stroke-width="1"/><path d="M1081.5 162.5 V166" stroke="#7f8cab" stroke-width="1"/><path d="M1089.0 162.5 V166" stroke="#7f8cab" stroke-width="1"/><path d="M1096.5 162.5 V166" stroke="#7f8cab" stroke-width="1"/><path d="M1104.0 162.5 V166" stroke="#7f8cab" stroke-width="1"/><path d="M1111.5 162.5 V166" stroke="#7f8cab" stroke-width="1"/><path d="M1119.0 162.5 V166" stroke="#7f8cab" stroke-width="1"/><path d="M1126.5 162.5 V166" stroke="#7f8cab" stroke-width="1"/><path d="M1134.0 162.5 V166" stroke="#7f8cab" stroke-width="1"/><path d="M1141.5 146.5 V166" stroke="#7f8cab" stroke-width="1"/><path d="M1149.0 162.5 V166" stroke="#7f8cab" stroke-width="1"/><path d="M1156.5 162.5 V166" stroke="#7f8cab" stroke-width="1"/><path d="M1164.0 162.5 V166" stroke="#7f8cab" stroke-width="1"/><path d="M1171.5 162.5 V166" stroke="#7f8cab" stroke-width="1"/><path d="M1179.0 162.5 V166" stroke="#7f8cab" stroke-width="1"/><path d="M1186.5 162.5 V166" stroke="#7f8cab" stroke-width="1"/><path d="M1194.0 162.5 V166" stroke="#7f8cab" stroke-width="1"/><path d="M1201.5 162.5 V166" stroke="#7f8cab" stroke-width="1"/><path d="M1209.0 162.5 V166" stroke="#7f8cab" stroke-width="1"/><path d="M1216.5 146.5 V166" stroke="#7f8cab" stroke-width="1"/><path d="M1224.0 162.5 V166" stroke="#7f8cab" stroke-width="1"/><path d="M1231.5 162.5 V166" stroke="#7f8cab" stroke-width="1"/><path d="M1239.0 162.5 V166" stroke="#7f8cab" stroke-width="1"/><path d="M1246.5 162.5 V166" stroke="#7f8cab" stroke-width="1"/><path d="M448 169.0 H452" stroke="#7f8cab" stroke-width="1"/><path d="M448 176.5 H452" stroke="#7f8cab" stroke-width="1"/><path d="M448 184.0 H452" stroke="#7f8cab" stroke-width="1"/><path d="M448 191.5 H452" stroke="#7f8cab" stroke-width="1"/><path d="M448 199.0 H452" stroke="#7f8cab" stroke-width="1"/><path d="M448 206.5 H452" stroke="#7f8cab" stroke-width="1"/><path d="M448 214.0 H452" stroke="#7f8cab" stroke-width="1"/><path d="M433 221.5 H452" stroke="#7f8cab" stroke-width="1"/><path d="M448 229.0 H452" stroke="#7f8cab" stroke-width="1"/><path d="M448 236.5 H452" stroke="#7f8cab" stroke-width="1"/><path d="M448 244.0 H452" stroke="#7f8cab" stroke-width="1"/><path d="M448 251.5 H452" stroke="#7f8cab" stroke-width="1"/><path d="M448 259.0 H452" stroke="#7f8cab" stroke-width="1"/><path d="M448 266.5 H452" stroke="#7f8cab" stroke-width="1"/><path d="M448 274.0 H452" stroke="#7f8cab" stroke-width="1"/><path d="M448 281.5 H452" stroke="#7f8cab" stroke-width="1"/><path d="M448 289.0 H452" stroke="#7f8cab" stroke-width="1"/><path d="M433 296.5 H452" stroke="#7f8cab" stroke-width="1"/><path d="M448 304.0 H452" stroke="#7f8cab" stroke-width="1"/><path d="M448 311.5 H452" stroke="#7f8cab" stroke-width="1"/><path d="M448 319.0 H452" stroke="#7f8cab" stroke-width="1"/><path d="M448 326.5 H452" stroke="#7f8cab" stroke-width="1"/><path d="M448 334.0 H452" stroke="#7f8cab" stroke-width="1"/><path d="M448 341.5 H452" stroke="#7f8cab" stroke-width="1"/><path d="M448 349.0 H452" stroke="#7f8cab" stroke-width="1"/><path d="M448 356.5 H452" stroke="#7f8cab" stroke-width="1"/><path d="M448 364.0 H452" stroke="#7f8cab" stroke-width="1"/><path d="M433 371.5 H452" stroke="#7f8cab" stroke-width="1"/><path d="M448 379.0 H452" stroke="#7f8cab" stroke-width="1"/><path d="M448 386.5 H452" stroke="#7f8cab" stroke-width="1"/><path d="M448 394.0 H452" stroke="#7f8cab" stroke-width="1"/><path d="M448 401.5 H452" stroke="#7f8cab" stroke-width="1"/><path d="M448 409.0 H452" stroke="#7f8cab" stroke-width="1"/><path d="M448 416.5 H452" stroke="#7f8cab" stroke-width="1"/><path d="M448 424.0 H452" stroke="#7f8cab" stroke-width="1"/><path d="M448 431.5 H452" stroke="#7f8cab" stroke-width="1"/><path d="M448 439.0 H452" stroke="#7f8cab" stroke-width="1"/><path d="M433 446.5 H452" stroke="#7f8cab" stroke-width="1"/><path d="M448 454.0 H452" stroke="#7f8cab" stroke-width="1"/><path d="M448 461.5 H452" stroke="#7f8cab" stroke-width="1"/><path d="M448 469.0 H452" stroke="#7f8cab" stroke-width="1"/><path d="M448 476.5 H452" stroke="#7f8cab" stroke-width="1"/><path d="M448 484.0 H452" stroke="#7f8cab" stroke-width="1"/><path d="M448 491.5 H452" stroke="#7f8cab" stroke-width="1"/><path d="M448 499.0 H452" stroke="#7f8cab" stroke-width="1"/><path d="M448 506.5 H452" stroke="#7f8cab" stroke-width="1"/><path d="M448 514.0 H452" stroke="#7f8cab" stroke-width="1"/><path d="M433 521.5 H452" stroke="#7f8cab" stroke-width="1"/><path d="M448 529.0 H452" stroke="#7f8cab" stroke-width="1"/><path d="M448 536.5 H452" stroke="#7f8cab" stroke-width="1"/><path d="M448 544.0 H452" stroke="#7f8cab" stroke-width="1"/><path d="M448 551.5 H452" stroke="#7f8cab" stroke-width="1"/><path d="M448 559.0 H452" stroke="#7f8cab" stroke-width="1"/><path d="M448 566.5 H452" stroke="#7f8cab" stroke-width="1"/><path d="M448 574.0 H452" stroke="#7f8cab" stroke-width="1"/><path d="M448 581.5 H452" stroke="#7f8cab" stroke-width="1"/><path d="M448 589.0 H452" stroke="#7f8cab" stroke-width="1"/><path d="M433 596.5 H452" stroke="#7f8cab" stroke-width="1"/><path d="M448 604.0 H452" stroke="#7f8cab" stroke-width="1"/><path d="M448 611.5 H452" stroke="#7f8cab" stroke-width="1"/><path d="M448 619.0 H452" stroke="#7f8cab" stroke-width="1"/><path d="M448 626.5 H452" stroke="#7f8cab" stroke-width="1"/><path d="M448 634.0 H452" stroke="#7f8cab" stroke-width="1"/><path d="M448 641.5 H452" stroke="#7f8cab" stroke-width="1"/><path d="M448 649.0 H452" stroke="#7f8cab" stroke-width="1"/><path d="M448 656.5 H452" stroke="#7f8cab" stroke-width="1"/><path d="M448 664.0 H452" stroke="#7f8cab" stroke-width="1"/><path d="M433 671.5 H452" stroke="#7f8cab" stroke-width="1"/><path d="M448 679.0 H452" stroke="#7f8cab" stroke-width="1"/><path d="M448 686.5 H452" stroke="#7f8cab" stroke-width="1"/><path d="M448 694.0 H452" stroke="#7f8cab" stroke-width="1"/><path d="M448 701.5 H452" stroke="#7f8cab" stroke-width="1"/><path d="M448 709.0 H452" stroke="#7f8cab" stroke-width="1"/><path d="M448 716.5 H452" stroke="#7f8cab" stroke-width="1"/><path d="M448 724.0 H452" stroke="#7f8cab" stroke-width="1"/><path d="M585.5 146.5 V166" stroke="#e8141c" stroke-width="1.2"/><path d="M433 722.7 H452" stroke="#e8141c" stroke-width="1.2"/><path d="M452.5 166.5 H1244" stroke="#444" stroke-width="1" stroke-dasharray="1.5 1.5"/><path d="M452.5 166.5 V729" stroke="#444" stroke-width="1" stroke-dasharray="1.5 1.5"/></svg>
<span class="t" id="t32" style="top:149.70px;font-size:11.5px;line-height:14px;color:#222;left:469.3px;transform-origin:0 50%;">0</span>
<span class="t" id="t33" style="top:149.70px;font-size:11.5px;line-height:14px;color:#222;left:544.3px;transform-origin:0 50%;">100</span>
<span class="t" id="t34" style="top:149.70px;font-size:11.5px;line-height:14px;color:#222;left:619.3px;transform-origin:0 50%;">200</span>
<span class="t" id="t35" style="top:149.70px;font-size:11.5px;line-height:14px;color:#222;left:694.3px;transform-origin:0 50%;">300</span>
<span class="t" id="t36" style="top:149.70px;font-size:11.5px;line-height:14px;color:#222;left:769.3px;transform-origin:0 50%;">400</span>
<span class="t" id="t37" style="top:149.70px;font-size:11.5px;line-height:14px;color:#222;left:844.3px;transform-origin:0 50%;">500</span>
<span class="t" id="t38" style="top:149.70px;font-size:11.5px;line-height:14px;color:#222;left:919.3px;transform-origin:0 50%;">600</span>
<span class="t" id="t39" style="top:149.70px;font-size:11.5px;line-height:14px;color:#222;left:994.3px;transform-origin:0 50%;">700</span>
<span class="t" id="t40" style="top:149.70px;font-size:11.5px;line-height:14px;color:#222;left:1069.3px;transform-origin:0 50%;">800</span>
<span class="t" id="t41" style="top:149.70px;font-size:11.5px;line-height:14px;color:#222;left:1144.3px;transform-origin:0 50%;">900</span>
<span class="t" id="t42" style="top:149.70px;font-size:11.5px;line-height:14px;color:#222;left:1219.3px;transform-origin:0 50%;">1000</span>
<span class="t" style="left:443.5px;top:223.5px;font-size:11px;line-height:14px;color:#222;transform-origin:0 0;transform:rotate(-90deg) translate(-100%,-50%);">0</span>
<span class="t" style="left:443.5px;top:298.5px;font-size:11px;line-height:14px;color:#222;transform-origin:0 0;transform:rotate(-90deg) translate(-100%,-50%);">100</span>
<span class="t" style="left:443.5px;top:373.5px;font-size:11px;line-height:14px;color:#222;transform-origin:0 0;transform:rotate(-90deg) translate(-100%,-50%);">200</span>
<span class="t" style="left:443.5px;top:448.5px;font-size:11px;line-height:14px;color:#222;transform-origin:0 0;transform:rotate(-90deg) translate(-100%,-50%);">300</span>
<span class="t" style="left:443.5px;top:523.5px;font-size:11px;line-height:14px;color:#222;transform-origin:0 0;transform:rotate(-90deg) translate(-100%,-50%);">400</span>
<span class="t" style="left:443.5px;top:598.5px;font-size:11px;line-height:14px;color:#222;transform-origin:0 0;transform:rotate(-90deg) translate(-100%,-50%);">500</span>
<span class="t" style="left:443.5px;top:673.5px;font-size:11px;line-height:14px;color:#222;transform-origin:0 0;transform:rotate(-90deg) translate(-100%,-50%);">600</span>
<span class="t" style="left:443.5px;top:170px;font-size:11px;line-height:14px;color:#222;transform-origin:0 0;transform:rotate(-90deg) translate(-100%,-50%);">-</span>
<div style="left:463.5px;top:218.5px;width:769px;height:450px;background:#fff;"></div>
<svg style="left:0px;top:0px;" width="1772" height="885" viewBox="0 0 1772 885"><rect x="464" y="219" width="768.2" height="449.2" fill="none" stroke="#7fcdee" stroke-width="1.4" stroke-dasharray="2 2.2"/></svg>
<div style="left:1246px;top:168px;width:6.5px;height:551px;background:#f3f3f3;border-radius:3.5px;"></div>
<div style="left:1246px;top:222px;width:6.5px;height:384px;background:#cdcdcd;border-radius:3.5px;"></div>
<div style="left:455px;top:722px;width:788px;height:6px;background:#f3f3f3;border-radius:3px;"></div>
<div style="left:531px;top:722px;width:564px;height:6px;background:#cdcdcd;border-radius:3px;"></div>
<div style="left:1245px;top:721px;width:8.5px;height:8.5px;background:#ebebeb;"></div>
<svg style="left:0px;top:0px;" width="1772" height="885" viewBox="0 0 1772 885"><path d="M674.75 294.2 V338.8" stroke="#f5a623" stroke-width="1.2"/><circle cx="674.75" cy="290.2" r="4" fill="#fff" stroke="#f5a623" stroke-width="1.2"/><path d="M724 338.8 V375.8 M718 338.8 H730 M718 375.8 H730" stroke="#f5a623" stroke-width="1.2" fill="none"/><path d="M637.5 387.8 H712 M637.5 382 V394 M712 382 V394" stroke="#f5a623" stroke-width="1.2" fill="none"/><rect x="637.5" y="338.8" width="74.5" height="37.0" rx="5.5" fill="#fff" stroke="#2f80d8" stroke-width="1.6"/></svg>
<div style="left:638.3px;top:339.8px;width:72.9px;height:35.0px;overflow:hidden;"><span class="t" style="left:-0.6px;top:50%;transform-origin:0 50%;transform:translateY(-50%) scaleX(1.065);margin-top:0.6px;font-family:'DejaVu Sans','Liberation Sans',sans-serif;font-size:10.5px;line-height:14px;color:#17408f;">N-StateLamp1</span></div>
<svg style="left:0px;top:0px;" width="1772" height="885" viewBox="0 0 1772 885"><rect x="633.8" y="335.1" width="7.4" height="7.4" fill="#fff" stroke="#f5a623" stroke-width="1.2"/><rect x="671.05" y="335.1" width="7.4" height="7.4" fill="#fff" stroke="#f5a623" stroke-width="1.2"/><rect x="708.3" y="335.1" width="7.4" height="7.4" fill="#fff" stroke="#f5a623" stroke-width="1.2"/><rect x="633.8" y="353.6" width="7.4" height="7.4" fill="#fff" stroke="#f5a623" stroke-width="1.2"/><rect x="708.3" y="353.6" width="7.4" height="7.4" fill="#fff" stroke="#f5a623" stroke-width="1.2"/><rect x="633.8" y="372.1" width="7.4" height="7.4" fill="#fff" stroke="#f5a623" stroke-width="1.2"/><rect x="671.05" y="372.1" width="7.4" height="7.4" fill="#fff" stroke="#f5a623" stroke-width="1.2"/><rect x="708.3" y="372.1" width="7.4" height="7.4" fill="#fff" stroke="#f5a623" stroke-width="1.2"/></svg>
<div style="left:662.4px;top:306.3px;width:23.5px;height:15.2px;background:#fff;border:1px solid #a0a0a0;box-sizing:border-box;"></div>
<span class="t" id="t43" style="top:310.50px;font-size:8px;line-height:10px;color:#333;font-family:'DejaVu Sans','Liberation Sans',sans-serif;left:677.5px;transform-origin:50% 50%;transform:translateX(-50%);">0</span>
<div style="left:645.4px;top:322.6px;width:26.4px;height:14.8px;background:#fff;border:1px solid #a0a0a0;box-sizing:border-box;"></div>
<span class="t" id="t44" style="top:326.60px;font-size:8px;line-height:10px;color:#333;font-family:'DejaVu Sans','Liberation Sans',sans-serif;left:658.6px;transform-origin:50% 50%;transform:translateX(-50%);">160</span>
<div style="left:610.3px;top:346.6px;width:26.6px;height:15px;background:#fff;border:1px solid #a0a0a0;box-sizing:border-box;"></div>
<span class="t" id="t45" style="top:350.70px;font-size:8px;line-height:10px;color:#333;font-family:'DejaVu Sans','Liberation Sans',sans-serif;left:623.7px;transform-origin:50% 50%;transform:translateX(-50%);">230</span>
<div style="left:713.3px;top:346.6px;width:23.6px;height:15px;background:#fff;border:1px solid #a0a0a0;box-sizing:border-box;"></div>
<span class="t" id="t46" style="top:350.70px;font-size:8px;line-height:10px;color:#333;font-family:'DejaVu Sans','Liberation Sans',sans-serif;left:726px;transform-origin:50% 50%;transform:translateX(-50%);">50</span>
<div style="left:645.4px;top:376.6px;width:26.4px;height:15px;background:#fff;border:1px solid #a0a0a0;box-sizing:border-box;"></div>
<span class="t" id="t47" style="top:380.70px;font-size:8px;line-height:10px;color:#333;font-family:'DejaVu Sans','Liberation Sans',sans-serif;left:658.6px;transform-origin:50% 50%;transform:translateX(-50%);">100</span>
<div style="left:424px;top:106px;width:4px;height:628px;background:#d3d6e0;"></div>
<div style="left:424px;top:77px;width:4px;height:29px;background:linear-gradient(to bottom,#6f7888 0,#8d97a9 4px);"></div>
<div style="left:1257px;top:106px;width:5px;height:628px;background:#d0d3de;"></div>
<div style="left:1257px;top:77px;width:5px;height:29px;background:linear-gradient(to bottom,#6f7888 0,#8d97a9 4px);"></div>
<div style="left:1262px;top:78px;width:399px;height:656px;background:#c9cdd9;"></div>
<div style="left:1262px;top:78px;width:399px;height:28px;background:linear-gradient(to bottom,#8d95a4 0,#9aa3b3 3.5px);"></div>
<div style="left:1262px;top:77.1px;width:399px;height:1px;background:#a8aaba;"></div>
<span class="t" id="t48" style="top:83.50px;font-size:12px;line-height:18px;color:#fff;font-weight:700;left:1270px;transform-origin:0 50%;transform:scaleX(0.6425);"><span class="k" style="font-size:1.13em;">プロパティ</span></span>
<svg style="left:1615px;top:84.5px;" width="44" height="16" viewBox="0 0 44 16"><path d="M1.8 5.5 H10.2 L6 9.7 Z" fill="#fff"/><path d="M18.7 3.5 H22.4 V9.4 H18.7 Z" fill="none" stroke="#fff" stroke-width="1.1"/><path d="M22.3 3.2 V9.4" stroke="#fff" stroke-width="1.7"/><path d="M17 9.9 H24.2 M20.5 10.1 V13.2" fill="none" stroke="#fff" stroke-width="1.3"/><path d="M31 3.5 L39.9 11.3 M39.9 3.5 L31 11.3" stroke="#fff" stroke-width="1.6" fill="none"/></svg>
<div style="left:1660.2px;top:78px;width:1px;height:28px;background:#cfd2e0;"></div>
<div style="left:1263px;top:106px;width:397px;height:35.5px;background:#f5f5f5;"></div>
<div style="left:1263px;top:141.5px;width:397px;height:1.5px;background:#ebebeb;"></div>
<div style="left:1263px;top:143px;width:397px;height:197px;background:#f5f5f5;"></div>
<div style="left:1263px;top:340px;width:397px;height:343px;background:#fff;"></div>
<div style="left:1263px;top:683px;width:397px;height:29px;background:#f5f5f5;"></div>
<div style="left:1265.5px;top:109.2px;width:254px;height:28.4px;background:#fff;border:1px solid #c6c6c6;box-sizing:border-box;"></div>
<svg style="left:1271.0px;top:115.7px;" width="13" height="13" viewBox="0 0 13 13"><ellipse cx="7" cy="5" rx="5.2" ry="4.3" fill="none" stroke="#9a9a9a" stroke-width="1.1" transform="rotate(-20 7 5)"/><path d="M3.6 8 L1.6 12.4" stroke="#9a9a9a" stroke-width="1.1"/></svg>
<span class="t" id="t49" style="top:113.90px;font-size:13px;line-height:20px;color:#a0a0a0;font-style:italic;left:1295.0px;transform-origin:0 50%;transform:scaleX(0.6064);transform-origin:0 50%;"><span class="k" style="font-size:1.13em;">プロパティ</span></span>
<div style="left:1525.2px;top:116px;width:1.6px;height:15px;background:#aeb3bf;"></div>
<div style="left:1532px;top:109.2px;width:38px;height:28.4px;background:#eeeeee;"></div>
<svg style="left:1541.5px;top:117px;" width="14" height="14" viewBox="0 0 14 14"><path d="M4.2 2.4 H12.6 M4.2 6.5 H12.6 M4.2 10.6 H12.6" stroke="#222" stroke-width="1.3"/><path d="M0.6 2.4 H2.6 M0.6 6.5 H2.6 M0.6 10.6 H2.6" stroke="#222" stroke-width="1.7"/></svg>
<div style="left:1575.2px;top:116px;width:1.6px;height:15px;background:#aeb3bf;"></div>
<div style="left:1582px;top:109.2px;width:37px;height:28.4px;background:#eeeeee;"></div>
<svg style="left:1591px;top:117.5px;" width="14" height="13" viewBox="0 0 14 13"><path d="M0.7 8.4 V0.7 H8.4 M2.7 10.4 V2.7 H10.4" fill="none" stroke="#222" stroke-width="1.05"/><rect x="4.6" y="4.2" width="8.4" height="8.2" fill="#fff" stroke="#222" stroke-width="1.15"/><path d="M6.6 8.3 H11 M8.8 6.1 V10.5" stroke="#222" stroke-width="1.05"/></svg>
<div style="left:1619.2px;top:109.2px;width:1px;height:28.4px;background:#cfcfcf;"></div>
<div style="left:1620.2px;top:109.2px;width:38px;height:28.4px;background:#eeeeee;"></div>
<svg style="left:1629.5px;top:117.5px;" width="14" height="13" viewBox="0 0 14 13"><path d="M10.6 3.4 V10 H3.4 M12.6 5.4 V12.2 H5.4" fill="none" stroke="#222" stroke-width="1.05"/><rect x="0.7" y="0.7" width="8.2" height="7.4" fill="#fff" stroke="#222" stroke-width="1.15"/><path d="M2.8 4.4 H6.8" stroke="#222" stroke-width="1.05"/></svg>
<span class="t" id="t50" style="top:155.00px;font-size:12px;line-height:18px;color:#222;left:1264.8px;transform-origin:0 50%;transform:scaleX(0.9785);">名前</span>
<div style="left:1296px;top:149.2px;width:361px;height:28.4px;background:#fff;border:1px solid #c6c6c6;box-sizing:border-box;"></div>
<span class="t" id="t51" style="top:154.20px;font-size:12px;line-height:18px;color:#222;left:1302px;transform-origin:0 50%;transform:scaleX(0.9493);">N_StateLamp1</span>
<span class="t" id="t52" style="top:191.00px;font-size:12px;line-height:18px;color:#222;left:1264.8px;transform-origin:0 50%;transform:scaleX(0.9785);">種類</span>
<div style="left:1295px;top:185.2px;width:363px;height:28.7px;background:#f1f1f1;border:1px solid #e2e2e2;box-sizing:border-box;"></div>
<span class="t" id="t53" style="top:190.50px;font-size:12px;line-height:18px;color:#9a9ea6;left:1301px;transform-origin:0 50%;transform:scaleX(0.9901);">N-StateLamp</span>
<span class="t" id="t54" style="top:227.00px;font-size:12px;line-height:18px;color:#222;left:1264.8px;transform-origin:0 50%;transform:scaleX(0.9785);">説明</span>
<div style="left:1295px;top:220.2px;width:363px;height:28.7px;background:#fff;border:1px solid #c6c6c6;box-sizing:border-box;"></div>
<span class="t" id="t55" style="top:258.60px;font-size:13.6px;line-height:20px;color:#2b7bd4;left:1277px;transform-origin:0 50%;transform:scaleX(1.0299);">機能</span>
<div style="left:1277px;top:286px;width:28px;height:4px;background:#1a73d3;"></div>
<span class="t" id="t56" style="top:258.60px;font-size:13.6px;line-height:20px;color:#222;left:1335.5px;transform-origin:0 50%;transform:scaleX(1.0115);">図形</span>
<svg style="left:1392.5px;top:261px;" width="23" height="15" viewBox="0 0 23 15"><path d="M12.6 3.6 C11.4 1.6 9.4 0.9 7.4 0.9 C3.6 0.9 0.9 2.8 0.9 5.6 C0.9 8.4 3.6 10.2 7.4 10.2 C8.2 10.2 8.8 10.1 9.4 10" fill="none" stroke="#1e1e1e" stroke-width="1.7"/><path d="M9.6 10.6 C10.8 13 12.8 14 15 14 C19 14 21.8 12.2 21.8 9.6 C21.8 7 19 5.2 15 5.2 C11.6 5.2 9 6.6 8.4 8.6 C8.2 9.4 8.6 10.4 9.6 10.6 M13.2 4.4 C14 5.6 13.6 7.4 12 8.6" fill="none" stroke="#1e1e1e" stroke-width="1.7"/></svg>
<svg style="left:1449.5px;top:259.5px;" width="17" height="20" viewBox="0 0 17 20"><path d="M1 1 H16 V12.6 L8.5 18.6 L1 12.6 Z" fill="none" stroke="#222" stroke-width="1.5" stroke-linejoin="round"/><path d="M8.5 4.4 L9.6 6.8 L12.2 7.1 L10.3 8.9 L10.8 11.5 L8.5 10.2 L6.2 11.5 L6.7 8.9 L4.8 7.1 L7.4 6.8 Z" fill="none" stroke="#222" stroke-width="1.2" stroke-linejoin="round"/></svg>
<span class="t" id="t57" style="top:299.60px;font-size:13.6px;line-height:20px;color:#2b7bd4;left:1280.5px;transform-origin:0 50%;transform:scaleX(1.0115);">基本</span>
<div style="left:1280px;top:327px;width:28px;height:4px;background:#1a73d3;"></div>
<span class="t" id="t58" style="top:299.60px;font-size:13.6px;line-height:20px;color:#222;left:1337.5px;transform-origin:0 50%;transform:scaleX(0.6617);"><span class="k" style="font-size:1.13em;">タッチ</span></span>
<span class="t" id="t59" style="top:299.60px;font-size:13.6px;line-height:20px;color:#222;left:1398.7px;transform-origin:0 50%;transform:scaleX(0.9931);">詳細</span>
<span class="t" id="t60" style="top:350.90px;font-size:12px;line-height:18px;color:#222;left:1307.5px;transform-origin:0 50%;transform:scaleX(0.9785);">種類</span>
<div style="left:1636px;top:353px;width:12px;height:12px;background:#fff;border:1px solid #555;box-sizing:border-box;"></div>
<div style="left:1480px;top:345px;width:152px;height:29px;background:#ececec;"></div>
<span class="t" id="t61" style="top:351.00px;font-size:12px;line-height:18px;color:#222;left:1491px;transform-origin:0 50%;transform:scaleX(0.6149);"><span class="k" style="font-size:1.13em;">ワード</span></span>
<svg style="left:1609px;top:354px;" width="14" height="10" viewBox="0 0 14 10"><path d="M1.5 2.2 L7 7.8 L12.5 2.2" fill="none" stroke="#333" stroke-width="1"/></svg>
<span class="t" id="t62" style="top:384.00px;font-size:12px;line-height:18px;color:#222;left:1307.5px;transform-origin:0 50%;transform:scaleX(0.9859);">状態変更条件</span>
<div style="left:1636px;top:386px;width:12px;height:12px;background:#fff;border:1px solid #555;box-sizing:border-box;"></div>
<div style="left:1480px;top:378px;width:152px;height:29px;background:#ececec;"></div>
<span class="t" id="t63" style="top:384.50px;font-size:12px;line-height:18px;color:#222;left:1491px;transform-origin:0 50%;transform:scaleX(0.9785);">状態</span>
<svg style="left:1609px;top:387px;" width="14" height="10" viewBox="0 0 14 10"><path d="M1.5 2.2 L7 7.8 L12.5 2.2" fill="none" stroke="#333" stroke-width="1"/></svg>
<span class="t" id="t64" style="top:417.00px;font-size:12px;line-height:18px;color:#222;left:1307.5px;transform-origin:0 50%;transform:scaleX(0.9857);">状態数</span>
<div style="left:1636px;top:419px;width:12px;height:12px;background:#fff;border:1px solid #555;box-sizing:border-box;"></div>
<div style="left:1480px;top:411px;width:152px;height:29px;background:#ececec;"></div>
<span class="t" id="t65" style="top:418.00px;font-size:11px;line-height:16px;color:#222;left:1588.7px;transform-origin:50% 50%;transform:translateX(-50%);">2</span>
<svg style="left:1611px;top:415px;" width="14" height="20" viewBox="0 0 14 20"><path d="M2.0 7.1 L7 2.0999999999999996 L12.0 7.1" fill="none" stroke="#333" stroke-width="1"/><path d="M2.0 13.1 L7 18.1 L12.0 13.1" fill="none" stroke="#333" stroke-width="1"/></svg>
<span class="t" id="t66" style="top:450.00px;font-size:12px;line-height:18px;color:#222;left:1307.5px;transform-origin:0 50%;transform:scaleX(0.9785);">変数</span>
<div style="left:1636px;top:452px;width:12px;height:12px;background:#fff;border:1px solid #555;box-sizing:border-box;"></div>
<div style="left:1479px;top:443px;width:154px;height:31px;background:#fff;border:1.3px solid #d21a1a;box-sizing:border-box;"></div>
<svg style="left:1479px;top:443px;" width="13" height="13" viewBox="0 0 13 13"><path d="M0 0 H12.5 L0 12.5 Z" fill="#e01010"/></svg>
<svg style="left:1264px;top:692px;" width="10" height="12" viewBox="0 0 10 12"><path d="M2.3 1.0 L7.7 6 L2.3 11.0" fill="none" stroke="#5a86dc" stroke-width="1.1"/></svg>
<span class="t" id="t67" style="top:685.40px;font-size:14px;line-height:20px;color:#222;left:1287px;transform-origin:0 50%;transform:scaleX(0.9643);">説明</span>
<div style="left:1262px;top:712px;width:62px;height:21.5px;background:#f5f5f5;border:1px solid #e3e3ea;border-top:none;box-sizing:border-box;"></div>
<span class="t" id="t68" style="top:714.50px;font-size:12px;line-height:18px;color:#707070;left:1274px;transform-origin:0 50%;transform:scaleX(0.6500);"><span class="k" style="font-size:1.13em;">プロパティ</span></span>
<div style="left:1324px;top:712px;width:149px;height:21.5px;background:#eeeef3;"></div>
<span class="t" id="t69" aria-label="オブジェクト一覧" style="top:714.50px;font-size:12px;line-height:18px;color:#333;left:1337px;transform-origin:0 50%;"><span class="k" style="font-size:1.13em;display:inline-block;width:51.98px;transform:scaleX(0.6394);transform-origin:0 50%;">オブジェクト</span>一覧</span>
<span class="t" id="t70" style="top:714.50px;font-size:12px;line-height:18px;color:#333;left:1431px;transform-origin:0 50%;transform:scaleX(0.6457);"><span class="k" style="font-size:1.13em;">イベント</span></span>
<div style="left:1473px;top:712px;width:188px;height:22px;background:#d9dce4;"></div>
<div style="left:91px;top:734px;width:1572px;height:9px;background:#d9dce4;"></div>
<div style="left:91px;top:738px;width:1572px;height:1px;background:#c3c7d3;"></div>
<div style="left:91px;top:739px;width:1572px;height:3.5px;background:#f4f5f7;"></div>
<div style="left:92px;top:742.5px;width:1569px;height:106.5px;background:#f5f5f5;"></div>
<div style="left:93px;top:742.6px;width:1568.5px;height:28.4px;background:#788496;"></div>
<span class="t" id="t71" style="top:749.50px;font-size:12px;line-height:18px;color:#fff;font-weight:700;left:101px;transform-origin:0 50%;transform:scaleX(0.6395);"><span class="k" style="font-size:1.13em;">エラー</span></span>
<svg style="left:1615.5px;top:749.9000000000001px;" width="44" height="16" viewBox="0 0 44 16"><path d="M1.8 5.5 H10.2 L6 9.7 Z" fill="#fff"/><path d="M16.4 8 H19.6 M19.8 4.4 V11.6" fill="none" stroke="#fff" stroke-width="1.2"/><path d="M20.2 5.6 H25.6 V9.6 H20.2 M20.2 10.2 H25.6" fill="none" stroke="#fff" stroke-width="1.1"/><path d="M31 3.5 L39.9 11.3 M39.9 3.5 L31 11.3" stroke="#fff" stroke-width="1.6" fill="none"/></svg>
<div style="left:96px;top:774px;width:364px;height:29px;background:#0058ad;"></div>
<div style="left:214.6px;top:774px;width:1.4px;height:29px;background:#a9c4e2;"></div>
<div style="left:339px;top:774px;width:1.4px;height:29px;background:#a9c4e2;"></div>
<svg style="left:105px;top:782px;" width="13.5" height="13.5" viewBox="0 0 13.5 13.5"><circle cx="6.75" cy="6.75" r="6.5" fill="#e3101c"/><path d="M4.4 4.4 L9.1 9.1 M9.1 4.4 L4.4 9.1" stroke="#f4838b" stroke-width="1"/></svg>
<span class="t" id="t72" aria-label="1 エラー" style="top:780.00px;font-size:12px;line-height:18px;color:#fff;font-weight:700;left:123.7px;transform-origin:0 50%;">1 <span class="k" style="font-size:1.13em;display:inline-block;width:23.48px;transform:scaleX(0.5776);transform-origin:0 50%;">エラー</span></span>
<svg style="left:223.5px;top:782px;" width="13" height="13" viewBox="0 0 13 13"><path d="M0.4 1.8 C3 1.8 5 1.2 6.5 0.2 C8 1.2 10 1.8 12.6 1.8 V6.4 C12.6 9.6 9.6 11.8 6.5 12.8 C3.4 11.8 0.4 9.6 0.4 6.4 Z" fill="#f08a0c"/></svg>
<span class="t" id="t73" aria-label="2 セキュリティー警告" style="top:780.00px;font-size:12px;line-height:18px;color:#fff;font-weight:700;left:240px;transform-origin:0 50%;">2 <span class="k" style="font-size:1.13em;display:inline-block;width:56.67px;transform:scaleX(0.6028);transform-origin:0 50%;">セキュリティー</span>警告</span>
<svg style="left:348px;top:781.5px;" width="14" height="13.5" viewBox="0 0 14 13.5"><path d="M7 0.6 L13.6 12.8 H0.4 Z" fill="#ffd21e" stroke="#ffd21e" stroke-width="0.8" stroke-linejoin="round"/><path d="M7 4.4 V8.8" stroke="#333" stroke-width="1.5"/><circle cx="7" cy="10.8" r="0.9" fill="#333"/></svg>
<span class="t" id="t74" style="top:780.00px;font-size:12px;line-height:18px;color:#fff;font-weight:700;left:367px;transform-origin:0 50%;transform:scaleX(0.9554);">0 警告</span>
<div style="left:465px;top:781px;width:1px;height:15px;background:#aaa;"></div>
<div style="left:467px;top:774px;width:120px;height:29px;background:#f3f3f3;"></div>
<span class="t" id="t75" aria-label="ソースオブジェクトに移動" style="top:780.00px;font-size:12px;line-height:18px;color:#a4a4a4;left:479px;transform-origin:0 50%;"><span class="k" style="font-size:1.13em;display:inline-block;width:74.98px;transform:scaleX(0.6184);transform-origin:0 50%;">ソースオブジェクト</span>に移動</span>
<div style="left:1136.2px;top:774.3px;width:521.8px;height:28.4px;background:#fff;border:1px solid #c6c6c6;box-sizing:border-box;"></div>
<svg style="left:1142px;top:781px;" width="12" height="13" viewBox="0 0 12 13"><ellipse cx="6.4" cy="5" rx="4.6" ry="4" fill="none" stroke="#9a9a9a" stroke-width="1" transform="rotate(-20 6.4 5)"/><path d="M3.4 7.8 L1.4 12" stroke="#9a9a9a" stroke-width="1"/></svg>
<span class="t" id="t76" aria-label="エラーと警告" style="top:780.00px;font-size:12px;line-height:18px;color:#9a9a9a;font-style:italic;left:1166px;transform-origin:0 50%;transform:scaleX(0.7434);"><span class="k" style="font-size:1.13em;">エラー</span>と警告</span>
<div style="left:96px;top:810px;width:1562px;height:35px;background:#fff;border:1px solid #cfcfcf;box-sizing:border-box;"></div>
<div style="left:97px;top:811px;width:1551.5px;height:28px;background:#ececec;"></div>
<div style="left:136px;top:811px;width:1px;height:28px;background:#c4c4c4;"></div>
<div style="left:636px;top:811px;width:1px;height:28px;background:#c4c4c4;"></div>
<div style="left:936px;top:811px;width:1px;height:28px;background:#c4c4c4;"></div>
<div style="left:1236px;top:811px;width:1px;height:28px;background:#c4c4c4;"></div>
<div style="left:1626px;top:811px;width:1px;height:28px;background:#c4c4c4;"></div>
<div style="left:1648.5px;top:811px;width:1px;height:28px;background:#c4c4c4;"></div>
<span class="t" id="t77" style="top:816.50px;font-size:12px;line-height:18px;color:#222;left:146.7px;transform-origin:0 50%;transform:scaleX(0.9577);">説明</span>
<span class="t" id="t78" style="top:816.50px;font-size:12px;line-height:18px;color:#222;left:646px;transform-origin:0 50%;transform:scaleX(0.6380);"><span class="k" style="font-size:1.13em;">ソース</span></span>
<span class="t" id="t79" style="top:816.50px;font-size:12px;line-height:18px;color:#222;left:946px;transform-origin:0 50%;transform:scaleX(0.7009);"><span class="k" style="font-size:1.13em;">パス</span></span>
<span class="t" id="t80" style="top:816.50px;font-size:12px;line-height:18px;color:#222;left:1246px;transform-origin:0 50%;transform:scaleX(0.6500);"><span class="k" style="font-size:1.13em;">プロパティ</span></span>
<div style="left:91px;top:849px;width:1572px;height:35px;background:#d9dce4;"></div>
<div style="left:92px;top:853px;width:39px;height:29px;background:#a4acbd;"></div>
<div style="left:92px;top:876.5px;width:39px;height:5.5px;background:#959db0;"></div>
<span class="t" id="t81" style="top:856.70px;font-size:12px;line-height:18px;color:#fff;left:102.5px;transform-origin:0 50%;transform:scaleX(0.6026);"><span class="k" style="font-size:1.13em;">エラー</span></span>
<div style="left:37px;top:18px;width:804px;height:2px;background:#000;"></div>
<div style="left:37px;top:62px;width:116px;height:2px;background:#000;"></div>
<div style="left:37px;top:126px;width:398px;height:2px;background:#000;"></div>
<div style="left:37px;top:271px;width:423px;height:2px;background:#000;"></div>
<div style="left:37px;top:648px;width:159px;height:2px;background:#000;"></div>
<div style="left:194px;top:648px;width:2px;height:73px;background:#000;"></div>
<div style="left:37px;top:720px;width:63px;height:2px;background:#000;"></div>
<div style="left:37px;top:755px;width:63px;height:2px;background:#000;"></div>
<div style="left:1286px;top:648px;width:442px;height:2px;background:#000;"></div>
<div style="left:1286px;top:648px;width:2px;height:73px;background:#000;"></div>
<div style="left:1441px;top:720px;width:287px;height:2px;background:#000;"></div>
<span class="t" id="t82" style="top:6.50px;font-size:21px;line-height:26px;color:#000;font-family:'DejaVu Sans','Liberation Sans',sans-serif;left:13px;transform-origin:0 50%;">1</span>
<span class="t" id="t83" style="top:51.00px;font-size:21px;line-height:26px;color:#000;font-family:'DejaVu Sans','Liberation Sans',sans-serif;left:13px;transform-origin:0 50%;">2</span>
<span class="t" id="t84" style="top:115.00px;font-size:21px;line-height:26px;color:#000;font-family:'DejaVu Sans','Liberation Sans',sans-serif;left:13px;transform-origin:0 50%;">3</span>
<span class="t" id="t85" style="top:260.00px;font-size:21px;line-height:26px;color:#000;font-family:'DejaVu Sans','Liberation Sans',sans-serif;left:13px;transform-origin:0 50%;">4</span>
<span class="t" id="t86" style="top:637.50px;font-size:21px;line-height:26px;color:#000;font-family:'DejaVu Sans','Liberation Sans',sans-serif;left:13px;transform-origin:0 50%;">5</span>
<span class="t" id="t87" style="top:709.00px;font-size:21px;line-height:26px;color:#000;font-family:'DejaVu Sans','Liberation Sans',sans-serif;left:13px;transform-origin:0 50%;">6</span>
<span class="t" id="t88" style="top:744.00px;font-size:21px;line-height:26px;color:#000;font-family:'DejaVu Sans','Liberation Sans',sans-serif;left:13px;transform-origin:0 50%;">7</span>
<span class="t" id="t89" style="top:636.30px;font-size:21px;line-height:26px;color:#000;font-family:'DejaVu Sans','Liberation Sans',sans-serif;left:1745px;transform-origin:0 50%;">8</span>
<span class="t" id="t90" style="top:709.00px;font-size:21px;line-height:26px;color:#000;font-family:'DejaVu Sans','Liberation Sans',sans-serif;left:1745px;transform-origin:0 50%;">9</span>
</body></html>
